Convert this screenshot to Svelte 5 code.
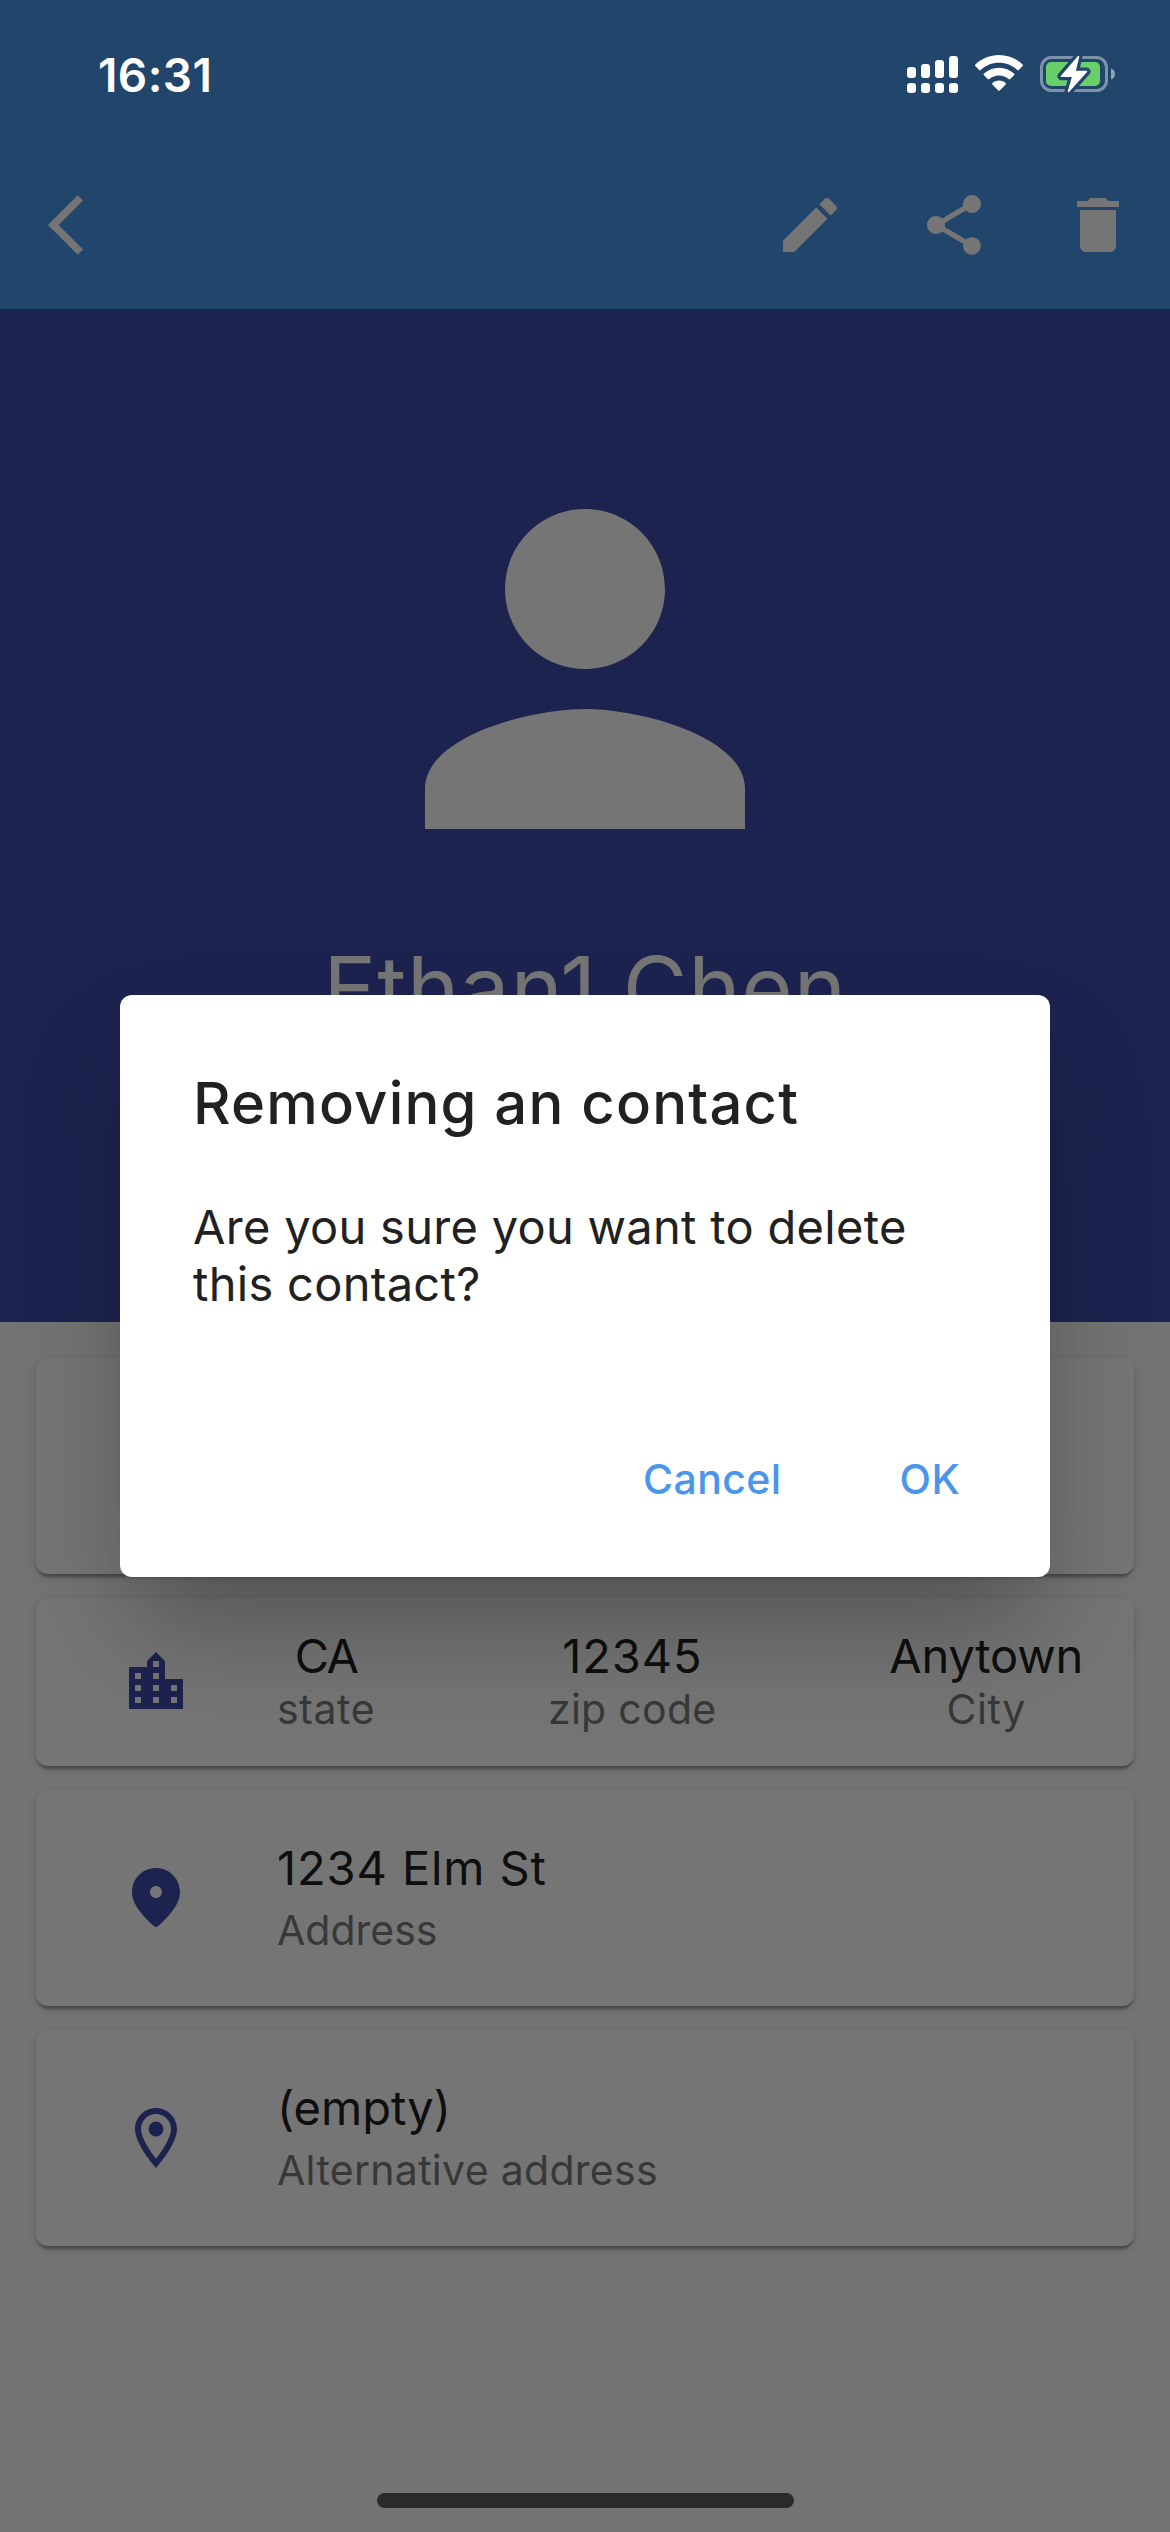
<script>
  const places = [
    { value: 'CA', label: 'state', cls: 'state' },
    { value: '12345', label: 'zip code', cls: 'zip' },
    { value: 'Anytown', label: 'City', cls: 'city' },
  ];
  const bars = [
    { x: 0, top: 11 },
    { x: 14, top: 8 },
    { x: 28, top: 4 },
    { x: 42, top: 0 },
  ];
</script>

<div class="screen">
  <div class="page">
    <header class="appbar">
      <svg class="icon" viewBox="0 0 24 24"><path d="M11.67 3.87L9.9 2.1 0 12l9.9 9.9 1.77-1.77L3.54 12z" /></svg>
      <div class="actions">
        <svg class="icon" viewBox="0 0 24 24"><path d="M3 17.25V21h3.75L17.81 9.94l-3.75-3.75L3 17.25zM20.71 7.04c.39-.39.39-1.02 0-1.41l-2.34-2.34c-.39-.39-1.02-.39-1.41 0l-1.83 1.83 3.75 3.75 1.83-1.83z" /></svg>
        <svg class="icon" viewBox="0 0 24 24"><path d="M18 16.08c-.76 0-1.44.3-1.96.77L8.91 12.7c.05-.23.09-.46.09-.7s-.04-.47-.09-.7l7.05-4.11c.54.5 1.25.81 2.04.81 1.66 0 3-1.34 3-3s-1.34-3-3-3-3 1.34-3 3c0 .24.04.47.09.7L8.04 9.81C7.5 9.31 6.79 9 6 9c-1.66 0-3 1.34-3 3s1.34 3 3 3c.79 0 1.5-.31 2.04-.81l7.12 4.16c-.05.21-.08.43-.08.65 0 1.61 1.31 2.92 2.92 2.92 1.61 0 2.92-1.31 2.92-2.92s-1.31-2.92-2.92-2.92z" /></svg>
        <svg class="icon" viewBox="0 0 24 24"><path d="M6 19c0 1.1.9 2 2 2h8c1.1 0 2-.9 2-2V7H6v12zM19 4h-3.500l-1-1h-5l-1 1H5v2h14V4z" /></svg>
      </div>
    </header>

    <section class="hero">
      <svg class="avatar" viewBox="0 0 24 24"><path d="M12 12c2.21 0 4-1.79 4-4s-1.790-4-4-4-4 1.790-4 4 1.790 4 4 4zm0 2c-2.670 0-8 1.340-8 4v2h16v-2c0-2.660-5.330-4-8-4z" /></svg>
      <h1 class="name">Ethan1 Chen</h1>
    </section>

    <main class="list">
      <div class="card"></div>
      <div class="card short">
        <svg class="lead" viewBox="0 0 24 24"><path d="M15 11V5l-3-3-3 3v2H3v14h18V11h-6zm-8 8H5v-2h2v2zm0-4H5v-2h2v2zm0-4H5V9h2v2zm6 8h-2v-2h2v2zm0-4h-2v-2h2v2zm0-4h-2V9h2v2zm0-4h-2V5h2v2zm6 12h-2v-2h2v2zm0-4h-2v-2h2v2z" /></svg>
        <div class="columns">
          {#each places as p}
            <div class="column {p.cls}">
              <div class="value">{p.value}</div>
              <div class="label">{p.label}</div>
            </div>
          {/each}
        </div>
      </div>
      <div class="card address">
        <svg class="lead" viewBox="0 0 24 24"><path d="M12 2c-4.200 0-8 3.220-8 8.200 0 3.180 2.450 6.920 7.340 11.230.38.330.95.330 1.330 0C17.550 17.120 20 13.380 20 10.200 20 5.220 16.200 2 12 2zm0 10c-1.100 0-2-.9-2-2s.9-2 2-2 2 .9 2 2-.9 2-2 2z" /></svg>
        <div class="lines">
          <div class="value">1234 Elm St</div>
          <div class="label">Address</div>
        </div>
      </div>
      <div class="card alternative">
        <svg class="lead" viewBox="0 0 24 24"><path d="M12 2C8.130 2 5 5.130 5 9c0 5.250 7 13 7 13s7-7.750 7-13c0-3.870-3.130-7-7-7zM7 9c0-2.760 2.240-5 5-5s5 2.240 5 5c0 2.880-2.880 7.190-5 9.880C9.920 16.210 7 11.850 7 9z" /><circle cx="12" cy="9" r="2.5" /></svg>
        <div class="lines">
          <div class="value">(empty)</div>
          <div class="label">Alternative address</div>
        </div>
      </div>
    </main>
  </div>

  <div class="scrim">
    <div class="dialog" role="dialog" aria-modal="true">
      <h2 class="title">Removing an contact</h2>
      <p class="message">Are you sure you want to delete<br />this contact?</p>
      <div class="buttons">
        <button class="cancel">Cancel</button>
        <button class="ok">OK</button>
      </div>
    </div>
  </div>

  <div class="status">
    <span class="time">16:31</span>
    <div class="indicators">
      <svg class="signal" viewBox="0 0 51 38" width="51" height="38">
        {#each bars as b}
          <rect x={b.x} y={b.top} width="9" height={22 - b.top} rx="3" />
          <rect x={b.x} y="27" width="9" height="10" rx="3" />
        {/each}
      </svg>
      <svg class="wifi" viewBox="0 0 48 36" width="48" height="36">
        <path d="M24 0C33 0 41.500 3.600 47.600 9.400q.8.800 0 1.600l-3.800 3.900q-.8.700-1.600 0C37.300 10.400 31 7.800 24 7.800S10.700 10.400 5.800 14.900q-.8.700-1.600 0L.4 11q-.8-.8 0-1.600C6.500 3.600 15 0 24 0z" />
        <path d="M24 12.800c5.800 0 11 2.200 15.100 5.800q.8.800 0 1.600l-3.900 3.900q-.8.700-1.600 0c-2.600-2.200-5.900-3.500-9.600-3.500s-7 1.300-9.600 3.500q-.8.700-1.600 0l-3.900-3.900q-.8-.8 0-1.600C13 15 18.200 12.800 24 12.800z" />
        <path d="M24 25.600c2.500 0 4.700.9 6.500 2.300q.9.800.1 1.600l-5.800 5.900q-.8.700-1.600 0l-5.800-5.900q-.8-.8.1-1.600c1.800-1.400 4-2.300 6.500-2.300z" />
      </svg>
      <svg class="battery" viewBox="0 0 76 38" width="76" height="38">
        <rect class="shell" x="1.500" y="2.500" width="65" height="33" rx="10" />
        <path class="cap" d="M71 13.500c2.500.8 4 3 4 5.500s-1.500 4.700-4 5.500z" />
        <rect class="charge" x="6" y="7" width="54" height="24" rx="5" />
        <path class="bolt-gap" d="M38.500 1.500L21.500 21.200h11.300L28.500 36.500 46.500 16.500H35z" />
        <path class="bolt" d="M38.500 1.500L21.500 21.200h11.300L28.500 36.500 46.500 16.500H35z" />
      </svg>
    </div>
  </div>

  <div class="home"></div>
</div>

<style>
  :global(body) {
    margin: 0;
  }
  .screen {
    position: relative;
    width: 1170px;
    height: 2532px;
    overflow: hidden;
    font-family: Inter, 'Liberation Sans', sans-serif;
    background: #fafafa;
  }
  .page {
    display: flex;
    flex-direction: column;
    height: 100%;
  }
  .appbar {
    box-sizing: border-box;
    height: 309px;
    padding: 189px 36px 0 48px;
    display: flex;
    justify-content: space-between;
    background: #4a96ec;
  }
  .icon {
    width: 72px;
    height: 72px;
    fill: #fff;
  }
  .actions {
    display: flex;
    gap: 72px;
  }
  .hero {
    box-sizing: border-box;
    height: 1013px;
    padding-top: 120px;
    display: flex;
    flex-direction: column;
    align-items: center;
    background: #414eac;
  }
  .avatar {
    width: 480px;
    height: 480px;
    fill: #fff;
    flex: none;
  }
  .name {
    margin: 19px 0 0;
    font-size: 88.5px;
    font-weight: 400;
    line-height: 120px;
    letter-spacing: 0.8px;
    white-space: nowrap;
    color: #fff;
  }
  .list {
    display: flex;
    flex-direction: column;
    gap: 24px;
    padding: 36px 36px 0;
  }
  .card {
    box-sizing: border-box;
    height: 216px;
    display: flex;
    align-items: center;
    padding: 0 51px 0 84px;
    border-radius: 12px;
    background: #fff;
    box-shadow:
      0 6px 3px -3px rgba(0, 0, 0, 0.2),
      0 3px 3px rgba(0, 0, 0, 0.14),
      0 3px 9px rgba(0, 0, 0, 0.12);
  }
  .short {
    height: 168px;
  }
  .lead {
    width: 72px;
    height: 72px;
    flex: none;
    margin-right: 85px;
    fill: #414eac;
  }
  .columns {
    flex: 1;
    align-self: flex-start;
    padding-top: 28px;
    display: flex;
    justify-content: space-between;
    text-align: center;
  }
  .lines {
    align-self: flex-start;
    padding-top: 48px;
  }
  .value {
    font-size: 47px;
    line-height: 60px;
    letter-spacing: 0.9px;
    color: #212121;
    white-space: nowrap;
  }
  .label {
    font-size: 41px;
    line-height: 46px;
    letter-spacing: 0.3px;
    color: #7b7b7b;
    white-space: nowrap;
  }
  .lines .label {
    margin-top: 9px;
  }
  .state .value {
    letter-spacing: -1.5px;
  }
  .state .label,
  .city .label {
    letter-spacing: 0.6px;
  }
  .city .value {
    letter-spacing: -0.2px;
  }
  .address .label {
    letter-spacing: 0;
  }
  .alternative .value {
    letter-spacing: 0;
  }
  .scrim {
    position: absolute;
    inset: 0;
    box-sizing: border-box;
    padding: 39px 0 0;
    display: flex;
    align-items: center;
    justify-content: center;
    background: rgba(0, 0, 0, 0.541);
  }
  .dialog {
    box-sizing: border-box;
    width: 930px;
    height: 582px;
    padding: 72px 72px 0 73px;
    border-radius: 12px;
    background: #fff;
    color: #212121;
    box-shadow: 0 60px 100px -12px rgba(0, 0, 0, 0.28);
  }
  .title {
    margin: 0;
    font-size: 58px;
    font-weight: 500;
    line-height: 72px;
    letter-spacing: 1.2px;
    white-space: nowrap;
  }
  .message {
    margin: 59px 0 0;
    font-size: 47px;
    line-height: 57px;
    letter-spacing: 0.3px;
    white-space: nowrap;
  }
  .buttons {
    display: flex;
    justify-content: flex-end;
    gap: 118px;
    margin-top: 137px;
    padding-right: 18px;
  }
  button {
    border: 0;
    padding: 0;
    background: none;
    font: 500 41px/60px Inter, sans-serif;
    letter-spacing: 0.4px;
    color: #4a96ec;
  }
  .status {
    position: absolute;
    inset: 0 0 auto;
    height: 141px;
    box-sizing: border-box;
    padding: 45px 54px 0 98px;
    display: flex;
    justify-content: space-between;
  }
  .time {
    font-size: 46px;
    font-weight: 600;
    line-height: 60px;
    letter-spacing: 0.4px;
    color: #fff;
  }
  .indicators {
    display: flex;
    align-items: flex-start;
    padding-top: 10px;
    fill: #fff;
  }
  .signal {
    margin: 1px 17px 0 0;
  }
  .wifi {
    margin-right: 17px;
  }
  .shell {
    fill: none;
    stroke: rgba(255, 255, 255, 0.42);
    stroke-width: 3;
  }
  .cap {
    fill: rgba(255, 255, 255, 0.5);
  }
  .charge {
    fill: #69d069;
  }
  .bolt-gap {
    fill: #22456c;
    stroke: #22456c;
    stroke-width: 8;
    stroke-linejoin: round;
  }
  .bolt {
    stroke: #fff;
    stroke-width: 1.5;
    stroke-linejoin: round;
  }
  .home {
    position: absolute;
    left: 377px;
    bottom: 24px;
    width: 417px;
    height: 15px;
    border-radius: 8px;
    background: #2a2a2a;
  }
</style>
